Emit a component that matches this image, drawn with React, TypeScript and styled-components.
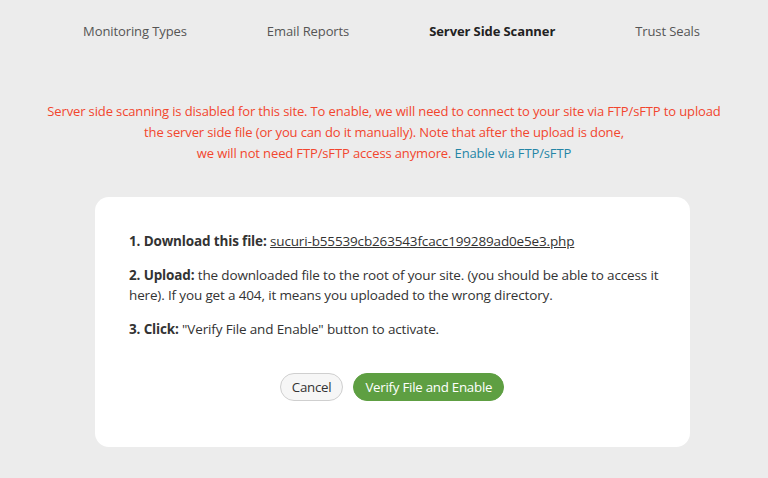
import React from "react";
import styled, { createGlobalStyle } from "styled-components";

const Global = createGlobalStyle`
  html, body { margin: 0; padding: 0; background: #ececec; }
  body { font-family: "Open Sans", "Liberation Sans", sans-serif; }
`;

const Page = styled.div`
  width: 768px;
  height: 478px;
  background: #ececec;
  display: flex;
  flex-direction: column;
  align-items: center;
  overflow: hidden;
`;

const Tabs = styled.nav`
  display: flex;
  gap: 80px;
  padding-top: 21px;
  padding-left: 15px;
  height: 20px;
  align-items: center;
`;

const Tab = styled.span<{ $active?: boolean }>`
  font-size: 13px;
  letter-spacing: -0.1px;
  color: ${(p) => (p.$active ? "#222" : "#555")};
  font-weight: ${(p) => (p.$active ? 700 : 400)};
`;

const Warning = styled.p`
  margin: 60px 0 0;
  width: 720px;
  text-align: center;
  font-size: 13px;
  line-height: 21px;
  letter-spacing: -0.13px;
  color: #f2462e;
`;

const Link = styled.a`
  color: #2585a6;
  text-decoration: none;
`;

const Card = styled.div`
  margin: 33px 0 0 17px;
  width: 595px;
  height: 250px;
  box-sizing: border-box;
  background: #fff;
  border-radius: 14px;
  padding: 34px 34px 0;
  display: flex;
  flex-direction: column;
`;

const Step = styled.p`
  margin: 0 0 14px;
  font-size: 13.5px;
  line-height: 20px;
  letter-spacing: -0.15px;
  color: #333;
  white-space: nowrap;
`;

const FileLink = styled.a`
  color: #333;
  text-decoration: underline;
`;

const Buttons = styled.div`
  display: flex;
  justify-content: center;
  gap: 10px;
  margin-top: 20px;
  padding-right: 1px;
`;

const Button = styled.button<{ $primary?: boolean }>`
  font-family: "Open Sans", "Liberation Sans", sans-serif;
  font-size: 13.3px;
  letter-spacing: -0.25px;
  height: 28px;
  border-radius: 14px;
  padding: 0 11px;
  border: 1px solid ${(p) => (p.$primary ? "#5e9f42" : "#cfcfcf")};
  background: ${(p) => (p.$primary ? "#5e9f42" : "#f6f6f6")};
  color: ${(p) => (p.$primary ? "#fff" : "#333")};
  cursor: pointer;
`;

export default function App() {
  return (
    <Page>
      <Global />
      <Tabs>
        <Tab>Monitoring Types</Tab>
        <Tab>Email Reports</Tab>
        <Tab $active>Server Side Scanner</Tab>
        <Tab>Trust Seals</Tab>
      </Tabs>
      <Warning>
        Server side scanning is disabled for this site. To enable, we will need to connect to your site via FTP/sFTP to upload
        <br />
        the server side file (or you can do it manually). Note that after the upload is done,
        <br />
        we will not need FTP/sFTP access anymore. <Link href="#">Enable via FTP/sFTP</Link>
      </Warning>
      <Card>
        <Step>
          <b>1. Download this file:</b> <FileLink href="#">sucuri-b55539cb263543fcacc199289ad0e5e3.php</FileLink>
        </Step>
        <Step>
          <b>2. Upload:</b> the downloaded file to the root of your site. (you should be able to access it
          <br />
          here). If you get a 404, it means you uploaded to the wrong directory.
        </Step>
        <Step>
          <b>3. Click:</b> "Verify File and Enable" button to activate.
        </Step>
        <Buttons>
          <Button>Cancel</Button>
          <Button $primary>Verify File and Enable</Button>
        </Buttons>
      </Card>
    </Page>
  );
}
